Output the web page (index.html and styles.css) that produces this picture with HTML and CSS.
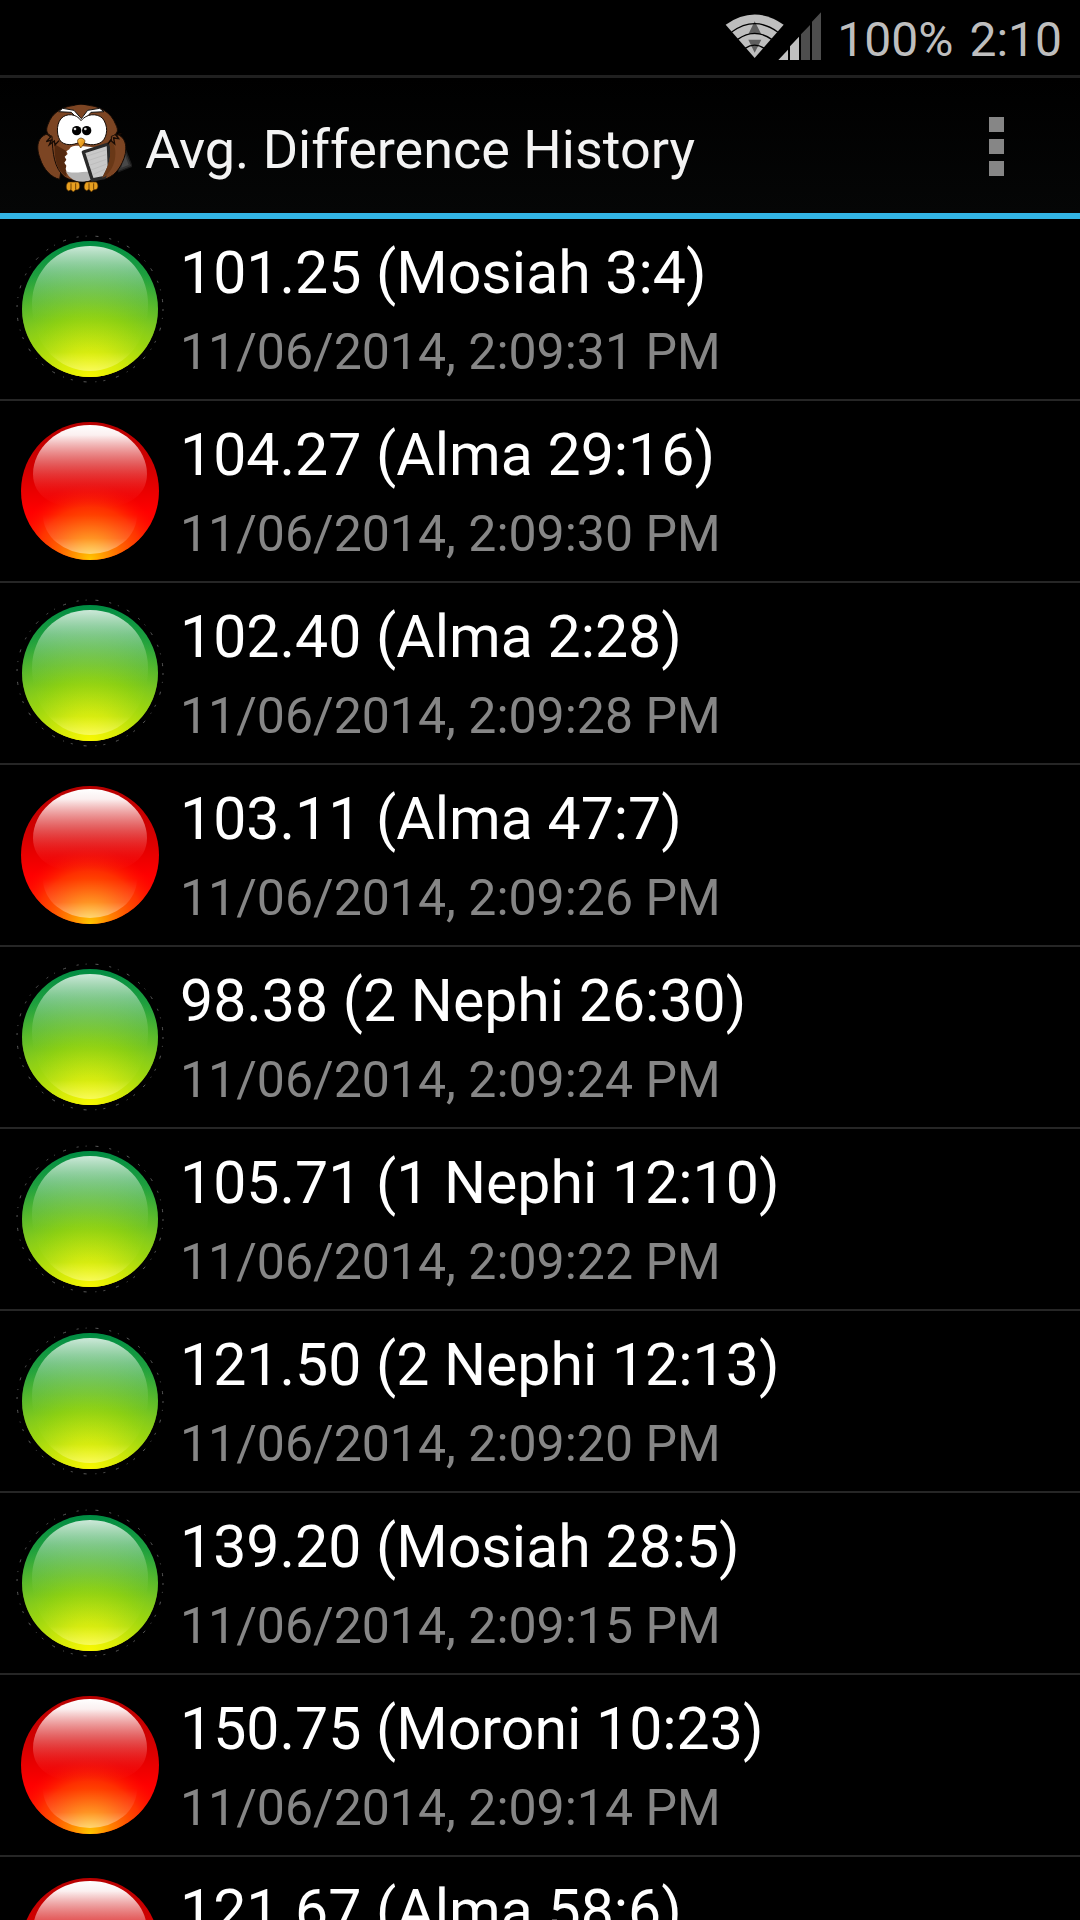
FILE: index.html
```html
<!DOCTYPE html>
<html lang="en">
<head>
<meta charset="utf-8">
<meta name="viewport" content="width=device-width, initial-scale=1">
<title>Avg. Difference History</title>
<link rel="stylesheet" href="styles.css">
</head>
<body>
<svg class="sprites" width="0" height="0" aria-hidden="true">
  <defs>
    <linearGradient id="green-rim" x1="0" y1="0" x2="0" y2="1">
      <stop offset="0" stop-color="#008c43"/><stop offset=".3" stop-color="#24a33d"/><stop offset=".55" stop-color="#55b82c"/><stop offset=".8" stop-color="#a4d41b"/><stop offset="1" stop-color="#fff200"/>
    </linearGradient>
    <radialGradient id="green-glow" cx=".5" cy="1" r=".85">
      <stop offset="0" stop-color="#f8f800"/><stop offset=".25" stop-color="#d6ec08" stop-opacity=".85"/><stop offset=".55" stop-color="#98d60c" stop-opacity=".75"/><stop offset="1" stop-color="#70c030" stop-opacity="0"/>
    </radialGradient>
    <linearGradient id="green-shine" x1="0" y1="0" x2="0" y2="1">
      <stop offset="0" stop-color="#fff" stop-opacity=".8"/><stop offset=".2" stop-color="#d8efd4" stop-opacity=".5"/><stop offset=".45" stop-color="#b0e090" stop-opacity=".18"/><stop offset=".6" stop-color="#b0e060" stop-opacity="0"/><stop offset=".85" stop-color="#ff8" stop-opacity=".05"/><stop offset="1" stop-color="#ffffb0" stop-opacity=".5"/>
    </linearGradient>
    <linearGradient id="red-rim" x1="0" y1="0" x2="0" y2="1">
      <stop offset="0" stop-color="#b80000"/><stop offset=".35" stop-color="#d40000"/><stop offset=".65" stop-color="#ff0000"/><stop offset="1" stop-color="#ff1800"/>
    </linearGradient>
    <radialGradient id="red-glow" cx=".5" cy="1" r=".55">
      <stop offset="0" stop-color="#ffc800"/><stop offset=".3" stop-color="#ff8c00" stop-opacity=".9"/><stop offset=".7" stop-color="#ff4800" stop-opacity=".65"/><stop offset="1" stop-color="#ff1000" stop-opacity="0"/>
    </radialGradient>
    <linearGradient id="red-shine" x1="0" y1="0" x2="0" y2="1">
      <stop offset="0" stop-color="#fff"/><stop offset=".12" stop-color="#fff" stop-opacity=".94"/><stop offset=".45" stop-color="#f2a0a0" stop-opacity=".6"/><stop offset=".8" stop-color="#ff4040" stop-opacity=".18"/><stop offset="1" stop-color="#ff2020" stop-opacity="0"/>
    </linearGradient>
    <linearGradient id="red-low" x1="0" y1="0" x2="0" y2="1">
      <stop offset=".5" stop-color="#fff" stop-opacity="0"/><stop offset=".8" stop-color="#fff" stop-opacity=".14"/><stop offset="1" stop-color="#fff" stop-opacity=".45"/>
    </linearGradient>
    <linearGradient id="beak" x1="0" y1="0" x2="1" y2="1">
      <stop offset="0" stop-color="#ffc34a"/><stop offset="1" stop-color="#d98200"/>
    </linearGradient>
  </defs>
  <symbol id="ball-green" viewBox="0 0 148 148">
    <circle cx="74" cy="74" r="73" fill="none" stroke="#5a5a5a" stroke-dasharray="2 7 1 9 3 11"/>
    <circle cx="74" cy="74" r="68" fill="url(#green-rim)"/>
    <circle cx="74" cy="74" r="68" fill="url(#green-glow)"/>
    <path d="M74 11C108 11 132 37 132 69C132 110 105 136 74 136C43 136 16 110 16 69C16 37 40 11 74 11Z" fill="url(#green-shine)"/>
  </symbol>
  <symbol id="ball-red" viewBox="0 0 148 148">
    <circle cx="74" cy="74" r="69" fill="url(#red-rim)"/>
    <circle cx="74" cy="74" r="69" fill="url(#red-glow)"/>
    <ellipse cx="74" cy="98" rx="47" ry="39" fill="url(#red-low)"/>
    <path d="M74 8C107 8 131 32 131 57C131 80 110 92 74 92C38 92 17 80 17 57C17 32 41 8 74 8Z" fill="url(#red-shine)"/>
  </symbol>
</svg>

<div class="app">
  <div class="status">
    <svg class="signals" viewBox="72 36 288 144" role="img" aria-label="Wi-Fi and mobile signal">
      <path d="M161 174L74 74Q161 13 248 74Z" fill="#bebebe"/>
      <path d="M161 64L142 103H181ZM142 119H181L161 158Z" fill="#5f5f5f"/>
      <path d="M92 96Q161 46 230 96M110 118Q161 82 212 118M132 145Q161 126 190 145" fill="none" stroke="#000" stroke-width="4"/>
      <path d="M232 180L261 149V180ZM267 180V139L294 110V180Z" fill="#c0c0c0"/>
      <path d="M300 180V103L327 75V180ZM333 180V65L360 37V180Z" fill="#4d4d4d"/>
    </svg>
    <span>100%</span>
    <time>2:10</time>
  </div>

  <header class="bar">
    <svg class="owl" viewBox="48 54 288 288" aria-hidden="true">
      <path d="M310 190L336 256L296 272L282 220Z" fill="#333" stroke="#1c1c1c" stroke-width="4"/>
      <path d="M312 214L326 252L304 260Z" fill="#484848"/>
      <g stroke="#150b05" stroke-width="3" stroke-linejoin="round">
        <path d="M95 157C55 159 45 192 60 232C70 265 94 290 119 295L135 190Z" fill="#7c4523"/>
        <path d="M275 157C315 159 325 192 312 232C300 265 281 288 251 295L235 190Z" fill="#7c4523"/>
        <path d="M185 72C128 71 96 95 84 130C75 151 82 160 96 166C98 217 102 262 135 289C160 304 211 305 237 291C270 265 275 216 274 166C293 160 297 149 287 130C274 95 240 71 185 72Z" fill="#7c4523"/>
      </g>
      <path d="M104 190C102 240 112 270 139 287L139 210Z" fill="#54290f"/>
      <path d="M183 195C164 192 149 197 149 204L139 211L143 219L134 227L139 236L133 245L139 254L137 264C145 294 175 307 208 298L240 280L236 200Z" fill="#fff"/>
      <path d="M137 270C160 281 198 268 222 272L217 295C183 309 151 302 137 270Z" fill="#b5b5b5"/>
      <path d="M116 92L154 94L185 126L213 94L252 92L239 82L203 88L184 113L162 88L128 82Z" fill="#fff" stroke="#111" stroke-width="3"/>
      <path d="M164 74L185 111L205 75Q184 68 164 74Z" fill="#7c4523"/>
      <path d="M183 119C170 98 139 95 123 113C107 132 110 169 124 183C143 197 169 190 183 181C198 192 225 196 245 183C264 166 265 133 247 111C229 96 200 98 183 119Z" fill="#fff" stroke="#160c06" stroke-width="3"/>
      <circle cx="170" cy="149" r="14"/><circle cx="200" cy="149" r="14"/>
      <circle cx="165" cy="144" r="4" fill="#ddd"/><circle cx="196" cy="144" r="4" fill="#ddd"/>
      <path d="M78 157L92 168L79 182L94 177L88 191L103 180L105 192L117 179M304 157L288 162L296 173L281 171L284 189L272 178L263 190" fill="none" stroke="#170b04" stroke-width="4"/>
      <path d="M190 213L265 189L268 258L252 290L217 297Z" fill="#c9c9c9" stroke="#292929" stroke-width="10" stroke-linejoin="round"/>
      <path d="M201 225L257 207M204 239L258 221M208 253L259 235M213 267L258 250M218 281L254 265" stroke="#bdbdbd" stroke-width="3"/>
      <path d="M268 186C277 224 265 257 247 290C278 279 308 248 314 215C316 190 303 165 290 166Z" fill="#7c4523"/>
      <path d="M268 186C277 224 265 257 247 290C266 282 280 258 284 238C290 210 284 190 274 180Z" fill="#693817"/>
      <path d="M304 157L288 162L296 173L281 171L284 189L272 178L263 190" fill="none" stroke="#170b04" stroke-width="4"/>
      <path d="M183 171C167 174 172 184 182 201C195 186 202 176 183 171Z" fill="url(#beak)" stroke="#4e2b00" stroke-width="2"/>
      <path d="M145 303C136 311 137 326 146 330L153 326L160 333L167 326C179 330 183 314 175 303ZM199 303C190 311 190 326 200 329L207 325L214 333L221 326C234 329 238 313 229 303Z" fill="#e8a020" stroke="#4e2b00" stroke-width="2"/>
      <path d="M153 307V326M167 307V326M207 307V325M221 307V326" stroke="#744200" stroke-width="3"/>
    </svg>
    <h1>Avg. Difference History</h1>
    <button class="menu" type="button" aria-label="More options">
      <i></i><i></i><i></i>
    </button>
  </header>

  <ul class="history">
    <li><svg class="ball"><use href="#ball-green"/></svg><div><h2>101.25 (Mosiah 3:4)</h2><p>11/06/2014, 2:09:31 PM</p></div></li>
    <li><svg class="ball"><use href="#ball-red"/></svg><div><h2>104.27 (Alma 29:16)</h2><p>11/06/2014, 2:09:30 PM</p></div></li>
    <li><svg class="ball"><use href="#ball-green"/></svg><div><h2>102.40 (Alma 2:28)</h2><p>11/06/2014, 2:09:28 PM</p></div></li>
    <li><svg class="ball"><use href="#ball-red"/></svg><div><h2>103.11 (Alma 47:7)</h2><p>11/06/2014, 2:09:26 PM</p></div></li>
    <li><svg class="ball"><use href="#ball-green"/></svg><div><h2>98.38 (2 Nephi 26:30)</h2><p>11/06/2014, 2:09:24 PM</p></div></li>
    <li><svg class="ball"><use href="#ball-green"/></svg><div><h2>105.71 (1 Nephi 12:10)</h2><p>11/06/2014, 2:09:22 PM</p></div></li>
    <li><svg class="ball"><use href="#ball-green"/></svg><div><h2>121.50 (2 Nephi 12:13)</h2><p>11/06/2014, 2:09:20 PM</p></div></li>
    <li><svg class="ball"><use href="#ball-green"/></svg><div><h2>139.20 (Mosiah 28:5)</h2><p>11/06/2014, 2:09:15 PM</p></div></li>
    <li><svg class="ball"><use href="#ball-red"/></svg><div><h2>150.75 (Moroni 10:23)</h2><p>11/06/2014, 2:09:14 PM</p></div></li>
    <li><svg class="ball"><use href="#ball-red"/></svg><div><h2>121.67 (Alma 58:6)</h2></div></li>
  </ul>
</div>
</body>
</html>
```
FILE: styles.css
```css
* {
  box-sizing: border-box;
  margin: 0;
  padding: 0;
}

body {
  background: #000;
  color: #fff;
  font-family: Roboto, "Noto Sans", sans-serif;
}

h1,
h2 {
  font-weight: 400;
}

.sprites {
  position: absolute;
}

.app {
  display: flex;
  flex-direction: column;
  height: 100vh;
}

.status {
  display: flex;
  flex: none;
  align-items: center;
  justify-content: flex-end;
  gap: 16px;
  padding: 12px 18px 7px;
  color: #bebebe;
  font-size: 48px;
  line-height: 56px;
}

.signals {
  width: 96px;
  height: 48px;
  margin-bottom: 8px;
}

.bar {
  display: flex;
  flex: none;
  align-items: center;
  gap: 13px;
  height: 144px;
  padding: 2px 64px 0 36px;
  border-top: 3px solid #202020;
  border-bottom: 6px solid #33b5e5;
  background: linear-gradient(#000, #050606);
}

.owl {
  width: 96px;
  height: 96px;
}

.bar h1 {
  flex: 1;
  padding-top: 6px;
  color: #f3f3f3;
  font-size: 54px;
  line-height: 64px;
}

.menu {
  display: grid;
  gap: 7px;
  padding: 12px;
  border: 0;
  background: none;
}

.menu i {
  width: 15px;
  height: 15px;
  background: #868686;
}

.history {
  flex: 1;
  min-height: 0;
  overflow-y: auto;
  scrollbar-width: none;
  list-style: none;
}

.history li {
  display: flex;
  gap: 16px;
  height: 182px;
  padding: 14px 16px;
  border-bottom: 2px solid #262626;
}

.ball {
  flex: none;
  width: 148px;
  height: 148px;
  margin-top: 2px;
}

.history h2 {
  font-size: 59px;
  line-height: 80px;
}

.history p {
  margin-top: 8px;
  color: #868686;
  font-size: 50px;
  line-height: 62px;
}
```
